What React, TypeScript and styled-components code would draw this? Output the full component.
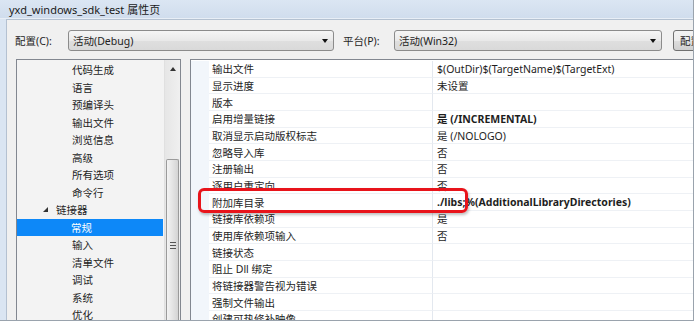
import styled, { createGlobalStyle } from 'styled-components'

const GlobalStyle = createGlobalStyle`
    html, body {
        margin: 0;
        padding: 0;
        width: 694px;
        height: 321px;
        overflow: hidden;
    }
    body {
        font-family: "Noto Sans", "Noto Sans CJK SC", sans-serif;
        font-size: 10.5px;
        color: #1e1e1e;
    }
`

const font = `font-family: "Noto Sans", "Noto Sans CJK SC", sans-serif;`

const Window = styled.div`
    width: 694px;
    height: 321px;
    box-sizing: border-box;
    display: flex;
    flex-direction: column;
    background: #dae5f2;
    border-right: 1px solid #9aa3ad;
    border-bottom: 1px solid #9aa3ad;
    overflow: hidden;
`

const TitleBar = styled.div`
    height: 18px;
    flex: 0 0 18px;
    display: flex;
    align-items: center;
    padding-left: 9px;
    font-size: 11px;
    color: #1a1a1a;
    background: linear-gradient(#dbe6f3, #d0dded);
    border-bottom: 1px solid #e8eef6;
`

const Body = styled.div`
    flex: 1;
    margin-left: 6px;
    background: #f0f0f0;
    border-left: 1px solid #b4c1d1;
    border-top: 1px solid #b4c1d1;
    display: flex;
    flex-direction: column;
    min-height: 0;
    overflow: hidden;
`

const ConfigRow = styled.div`
    display: flex;
    align-items: center;
    height: 21px;
    margin-top: 10px;
    padding-left: 8px;
`

const Label = styled.div<{ $w: number; $ml?: number }>`
    width: ${(p) => p.$w}px;
    margin-left: ${(p) => p.$ml ?? 0}px;
    flex: none;
`

const Combo = styled.div<{ $w: number }>`
    ${font}
    width: ${(p) => p.$w}px;
    height: 21px;
    box-sizing: border-box;
    flex: none;
    display: flex;
    align-items: center;
    justify-content: space-between;
    padding: 0 5px 0 4px;
    border: 1px solid #8b8b8b;
    border-radius: 3px;
    background: linear-gradient(#f5f5f5, #e9e9e9 50%, #dfdfdf 51%, #d9d9d9);
`

const Arrow = styled.span`
    width: 0;
    height: 0;
    border-left: 3.5px solid transparent;
    border-right: 3.5px solid transparent;
    border-top: 4px solid #111;
`

const Button = styled.div`
    width: 80px;
    height: 21px;
    box-sizing: border-box;
    flex: none;
    margin-left: 11px;
    padding-left: 6px;
    display: flex;
    align-items: center;
    white-space: nowrap;
    border: 1px solid #707070;
    border-radius: 3px;
    background: linear-gradient(#f3f3f3, #ebebeb 50%, #dddddd 51%, #cfcfcf);
`

const Main = styled.div`
    flex: 1;
    display: flex;
    margin-top: 8px;
    padding-left: 9px;
    min-height: 0;
`

const TreePanel = styled.div`
    width: 165px;
    flex: none;
    box-sizing: border-box;
    border: 1px solid #828790;
    border-bottom: none;
    background: #f3f3f3;
    display: flex;
`

const TreeList = styled.div`
    flex: 1;
    padding-top: 1px;
    overflow: hidden;
`

const TreeItem = styled.div<{ $indent: number; $selected?: boolean }>`
    height: 17.5px;
    display: flex;
    align-items: center;
    padding-left: ${(p) => p.$indent}px;
    margin-right: 1px;
    white-space: nowrap;
    background: ${(p) => (p.$selected ? '#0d88f8' : 'transparent')};
    color: ${(p) => (p.$selected ? '#ffffff' : '#1e1e1e')};
`

const Expander = styled.span`
    width: 0;
    height: 0;
    margin-right: 8px;
    border-left: 5px solid transparent;
    border-bottom: 5px solid #333;
`

const ScrollBar = styled.div`
    width: 15px;
    flex: none;
    display: flex;
    flex-direction: column;
    background: linear-gradient(90deg, #e6e6e6, #f0f0f0);
    border-left: 1px solid #e0e0e0;
`

const ScrollButton = styled.div`
    height: 17px;
    display: flex;
    align-items: center;
    justify-content: center;
    &::after {
        content: '';
        width: 0;
        height: 0;
        border-left: 3.5px solid transparent;
        border-right: 3.5px solid transparent;
        border-bottom: 4px solid #333;
    }
`

const Track = styled.div`
    height: 82px;
`

const Thumb = styled.div`
    flex: 1;
    margin: 0 1px;
    border: 1px solid #9a9a9a;
    border-bottom: none;
    border-radius: 2px 2px 0 0;
    background: linear-gradient(90deg, #f3f3f3, #e4e4e4 50%, #d4d4d4);
    display: flex;
    flex-direction: column;
    align-items: center;
    padding-top: 82px;
    gap: 2px;
`

const Grip = styled.span`
    width: 6px;
    height: 1px;
    background: #555;
`

const Grid = styled.div`
    flex: 1;
    margin-left: 9px;
    position: relative;
    box-sizing: border-box;
    border: 1px solid #828790;
    border-right: none;
    border-bottom: none;
    background: #ffffff;
    display: flex;
    flex-direction: column;
    padding-top: 1px;
    overflow: hidden;
`

const Row = styled.div`
    height: 16.67px;
    flex: none;
    display: grid;
    grid-template-columns: 18px 223px 1fr;
`

const Margin = styled.div`
    background: #f2f6fb;
`

const Cell = styled.div<{ $bold?: boolean; $value?: boolean }>`
    display: flex;
    align-items: center;
    padding-left: ${(p) => (p.$value ? 4 : 3)}px;
    white-space: nowrap;
    box-sizing: border-box;
    border-bottom: 1px solid #eef1f5;
    border-left: ${(p) => (p.$value ? '1px solid #e3e8ef' : 'none')};
    font-weight: ${(p) => (p.$bold ? 700 : 400)};
`

const Highlight = styled.div`
    position: absolute;
    left: 7px;
    top: 128px;
    width: 270px;
    height: 25px;
    box-sizing: border-box;
    border: 3px solid #e8141b;
    border-radius: 6px;
    box-shadow: 1px 2px 3px rgba(0, 0, 0, 0.25);
`

const tree: { text: string; indent: number; expander?: boolean; selected?: boolean }[] = [
    { text: '代码生成', indent: 55 },
    { text: '语言', indent: 55 },
    { text: '预编译头', indent: 55 },
    { text: '输出文件', indent: 55 },
    { text: '浏览信息', indent: 55 },
    { text: '高级', indent: 55 },
    { text: '所有选项', indent: 55 },
    { text: '命令行', indent: 55 },
    { text: '链接器', indent: 26, expander: true },
    { text: '常规', indent: 54, selected: true },
    { text: '输入', indent: 55 },
    { text: '清单文件', indent: 55 },
    { text: '调试', indent: 55 },
    { text: '系统', indent: 55 },
    { text: '优化', indent: 55 },
]

const props: { name: string; value?: string; bold?: boolean }[] = [
    { name: '输出文件', value: '$(OutDir)$(TargetName)$(TargetExt)' },
    { name: '显示进度', value: '未设置' },
    { name: '版本' },
    { name: '启用增量链接', value: '是 (/INCREMENTAL)', bold: true },
    { name: '取消显示启动版权标志', value: '是 (/NOLOGO)' },
    { name: '忽略导入库', value: '否' },
    { name: '注册输出', value: '否' },
    { name: '逐用户重定向', value: '否' },
    { name: '附加库目录', value: './libs;%(AdditionalLibraryDirectories)', bold: true },
    { name: '链接库依赖项', value: '是' },
    { name: '使用库依赖项输入', value: '否' },
    { name: '链接状态' },
    { name: '阻止 Dll 绑定' },
    { name: '将链接器警告视为错误' },
    { name: '强制文件输出' },
    { name: '创建可热修补映像' },
]

export default function App() {
    return (
        <>
            <GlobalStyle />
            <Window>
                <TitleBar>yxd_windows_sdk_test 属性页</TitleBar>
                <Body>
                    <ConfigRow>
                        <Label $w={53}>配置(C):</Label>
                        <Combo $w={266}>
                            活动(Debug)
                            <Arrow />
                        </Combo>
                        <Label $w={51} $ml={9}>
                            平台(P):
                        </Label>
                        <Combo $w={268}>
                            活动(Win32)
                            <Arrow />
                        </Combo>
                        <Button>配置管理器</Button>
                    </ConfigRow>
                    <Main>
                        <TreePanel>
                            <TreeList>
                                {tree.map((t) => (
                                    <TreeItem key={t.text} $indent={t.indent} $selected={t.selected}>
                                        {t.expander && <Expander />}
                                        {t.text}
                                    </TreeItem>
                                ))}
                            </TreeList>
                            <ScrollBar>
                                <ScrollButton />
                                <Track />
                                <Thumb>
                                    <Grip />
                                    <Grip />
                                    <Grip />
                                </Thumb>
                            </ScrollBar>
                        </TreePanel>
                        <Grid>
                            {props.map((p) => (
                                <Row key={p.name}>
                                    <Margin />
                                    <Cell>{p.name}</Cell>
                                    <Cell $value $bold={p.bold}>
                                        {p.value}
                                    </Cell>
                                </Row>
                            ))}
                            <Highlight />
                        </Grid>
                    </Main>
                </Body>
            </Window>
        </>
    )
}
